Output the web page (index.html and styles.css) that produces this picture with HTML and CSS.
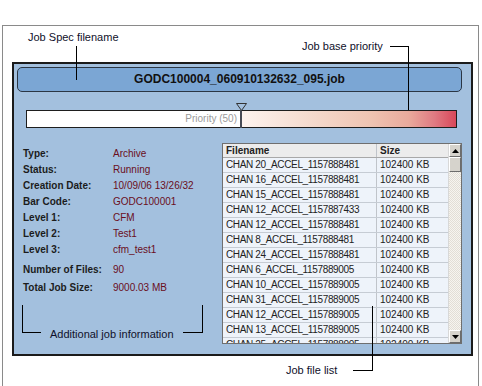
FILE: index.html
```html
<!DOCTYPE html>
<html>
<head>
<meta charset="utf-8">
<link rel="stylesheet" href="styles.css">
</head>
<body>
<div class="frame">
  <div class="note note-spec">Job Spec filename</div>
  <div class="note note-prio">Job base priority</div>
  <div class="note note-list">Job file list</div>
  <div class="vline line-spec"></div>
  <div class="hline line-prio-h"></div>
  <div class="vline line-prio-v"></div>
  <div class="hline line-list-h"></div>
  <div class="vline line-list-v"></div>

  <div class="panel">
    <div class="filename">GODC100004_060910132632_095.job</div>
    <div class="priority">
      <div class="prio-low">Priority (50)</div>
      <div class="prio-high"></div>
      <div class="prio-mark"></div>
      <svg class="prio-tri" width="11" height="8" viewBox="0 0 11 8"><polygon points="0.5,0.5 10.5,0.5 5.5,7.5" fill="#a3c0de" stroke="#333" stroke-width="1"/></svg>
    </div>
    <div class="content">
      <div class="info">
        <div class="rows">
          <span class="lbl">Type:</span><span class="val">Archive</span>
          <span class="lbl">Status:</span><span class="val">Running</span>
          <span class="lbl">Creation Date:</span><span class="val">10/09/06 13/26/32</span>
          <span class="lbl">Bar Code:</span><span class="val">GODC100001</span>
          <span class="lbl">Level 1:</span><span class="val">CFM</span>
          <span class="lbl">Level 2:</span><span class="val">Test1</span>
          <span class="lbl">Level 3:</span><span class="val">cfm_test1</span>
        </div>
        <div class="rows rows-tall">
          <span class="lbl">Number of Files:</span><span class="val">90</span>
          <span class="lbl">Total Job Size:</span><span class="val">9000.03 MB</span>
        </div>
        <div class="bracket">
          <span class="seg seg-l"></span>
          <span class="bracket-text">Additional job information</span>
          <span class="seg seg-r"></span>
        </div>
      </div>
      <div class="table">
        <div class="grid">
          <div class="row head"><span class="c1">Filename</span><span class="c2">Size</span></div>
          <div class="row"><span class="c1">CHAN 20_ACCEL_1157888481</span><span class="c2">102400 KB</span></div>
          <div class="row"><span class="c1">CHAN 16_ACCEL_1157888481</span><span class="c2">102400 KB</span></div>
          <div class="row"><span class="c1">CHAN 15_ACCEL_1157888481</span><span class="c2">102400 KB</span></div>
          <div class="row"><span class="c1">CHAN 12_ACCEL_1157887433</span><span class="c2">102400 KB</span></div>
          <div class="row"><span class="c1">CHAN 12_ACCEL_1157888481</span><span class="c2">102400 KB</span></div>
          <div class="row"><span class="c1">CHAN 8_ACCEL_1157888481</span><span class="c2">102400 KB</span></div>
          <div class="row"><span class="c1">CHAN 24_ACCEL_1157888481</span><span class="c2">102400 KB</span></div>
          <div class="row"><span class="c1">CHAN 6_ACCEL_1157889005</span><span class="c2">102400 KB</span></div>
          <div class="row"><span class="c1">CHAN 10_ACCEL_1157889005</span><span class="c2">102400 KB</span></div>
          <div class="row"><span class="c1">CHAN 31_ACCEL_1157889005</span><span class="c2">102400 KB</span></div>
          <div class="row"><span class="c1">CHAN 12_ACCEL_1157889005</span><span class="c2">102400 KB</span></div>
          <div class="row"><span class="c1">CHAN 13_ACCEL_1157889005</span><span class="c2">102400 KB</span></div>
          <div class="row"><span class="c1">CHAN 25_ACCEL_1157888005</span><span class="c2">102400 KB</span></div>
        </div>
        <div class="scroll">
          <div class="sbtn"><svg width="7" height="4" viewBox="0 0 7 4"><polygon points="3.5,0 7,4 0,4" fill="#000"/></svg></div>
          <div class="sthumb"></div>
          <div class="strack"></div>
          <div class="sbtn"><svg width="7" height="4" viewBox="0 0 7 4"><polygon points="0,0 7,0 3.5,4" fill="#000"/></svg></div>
        </div>
      </div>
    </div>
  </div>
</div>
</body>
</html>
```

FILE: styles.css
```css
* { box-sizing: border-box; }
html, body { margin: 0; padding: 0; background: #fff; }
body { font-family: "Liberation Sans", Arial, sans-serif; }

.frame {
  position: relative;
  margin: 25px 0 0 2px;
  width: 477px;
  height: 372px;
  border: 1px solid #8a8a8a;
  border-bottom: none;
  padding: 36px 0 0 9px;
}

.note {
  position: absolute;
  font-size: 11px;
  line-height: 14px;
  color: #10102a;
  white-space: nowrap;
}
.note-spec { left: 25px; top: 4px; }
.note-prio { left: 299px; top: 13px; }
.note-list { left: 283px; top: 337px; }

.vline { position: absolute; width: 1px; background: #000; }
.hline { position: absolute; height: 1px; background: #000; }
.line-spec { left: 73px; top: 20px; height: 34px; }
.line-prio-h { left: 387px; top: 20px; width: 19px; }
.line-prio-v { left: 405px; top: 20px; height: 73px; }
.line-list-h { left: 350px; top: 344px; width: 20px; }
.line-list-v { left: 369px; top: 280px; height: 65px; z-index: 2; }

.panel {
  width: 461px;
  height: 294px;
  border: 2px solid #1b1b1b;
  background: #a3c0de;
  padding-top: 3px;
}

.filename {
  margin: 0 9px 0 3px;
  height: 25px;
  border: 1px solid #2b3644;
  border-radius: 5px;
  background: #7ba6d4;
  font-weight: bold;
  font-size: 12px;
  line-height: 23px;
  text-align: center;
  color: #111;
}

.priority {
  position: relative;
  display: flex;
  margin: 18px 0 0 12px;
  width: 431px;
  height: 18px;
  border: 1px solid #1e1e1e;
}
.prio-low {
  width: 214px;
  background: #fff;
  color: #9a9a9a;
  font-size: 10px;
  line-height: 16px;
  text-align: right;
  padding-right: 4px;
}
.prio-high {
  flex: 1;
  background: linear-gradient(to right, #fdf3ef 0%, #f4d8cb 35%, #efc4b2 60%, #e9aa9c 78%, #e07a82 90%, #d8485a 100%);
}
.prio-mark {
  position: absolute;
  left: 213px;
  top: -1px;
  width: 2px;
  height: 18px;
  background: #474a55;
}
.prio-tri {
  position: absolute;
  left: 209px;
  top: -8px;
}

.content {
  display: flex;
  margin-top: 15px;
}

.info {
  width: 208px;
  padding: 3px 0 0 9px;
}
.rows {
  display: grid;
  grid-template-columns: 90px auto;
  font-size: 10px;
  line-height: 16px;
}
.rows-tall { line-height: 18px; margin-top: 3px; }
.lbl { font-weight: bold; color: #1c1c1c; }
.val { color: #6a0e1c; }

.bracket {
  display: flex;
  align-items: flex-end;
  margin: 8px 0 0 -1px;
  width: 181px;
  height: 28px;
  border-left: 1px solid #000;
  border-right: 1px solid #000;
}
.seg { height: 1px; background: #000; }
.seg-l { width: 18px; margin-right: 9px; }
.seg-r { width: 19px; margin-left: auto; }
.bracket-text {
  font-size: 11px;
  line-height: 14px;
  color: #10102a;
  margin-bottom: -8px;
  white-space: nowrap;
}

.table {
  display: flex;
  width: 240px;
  height: 201px;
  border: 1px solid #6f6f6f;
  background: #eef3fa;
  overflow: hidden;
}
.grid { width: 225px; overflow: hidden; }
.row {
  display: flex;
  height: 15px;
  border-bottom: 1px solid #c6ccd4;
  font-size: 10px;
  line-height: 14px;
  color: #222;
}
.row.head {
  height: 14px;
  background: #ececec;
  border-bottom: 1px solid #a8a8a8;
  font-weight: bold;
  line-height: 13px;
}
.c1 {
  width: 154px;
  padding-left: 3px;
  border-right: 1px solid #c0c4ca;
  letter-spacing: -0.35px;
  white-space: nowrap;
  overflow: hidden;
}
.head .c1 { letter-spacing: 0; }
.c2 { flex: 1; padding-left: 3px; white-space: nowrap; }

.scroll {
  width: 13px;
  display: flex;
  flex-direction: column;
  background-color: #efece6;
  background-image: repeating-conic-gradient(#e2ded6 0 25%, #f6f4f0 0 50%);
  background-size: 2px 2px;
  border-left: 1px solid #d8d8d8;
}
.sbtn, .sthumb {
  height: 13px;
  background: #d6d3cc;
  border-top: 1px solid #fff;
  border-left: 1px solid #fff;
  border-right: 1px solid #6c6c6c;
  border-bottom: 1px solid #6c6c6c;
  display: flex;
  align-items: center;
  justify-content: center;
}
.sthumb { height: 15px; }
.strack { flex: 1; }
```
